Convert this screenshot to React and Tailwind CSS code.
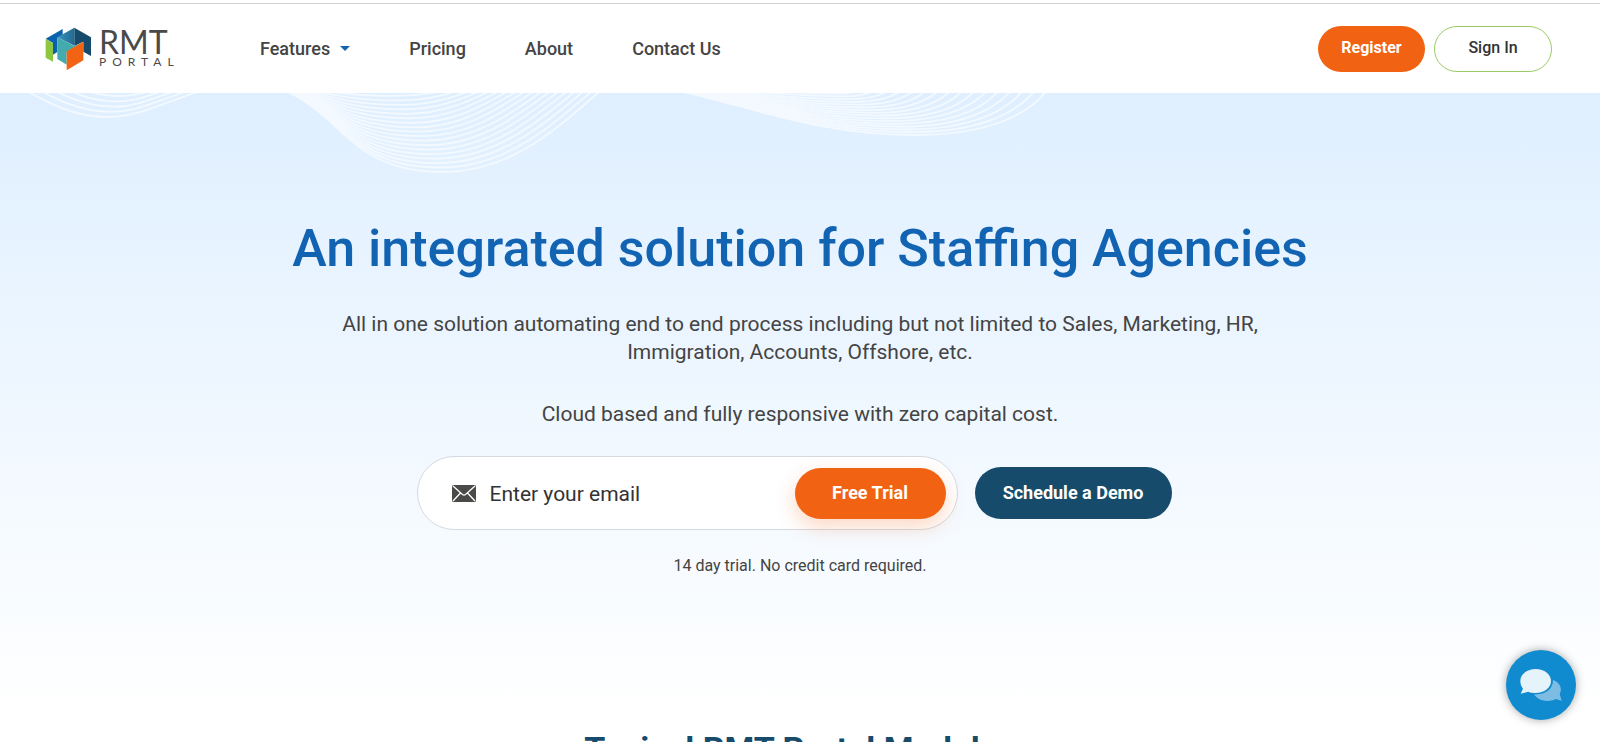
import React, { useState } from 'react'

const navLinks = ['Pricing', 'About', 'Contact Us']

// each group blends from its inner curve to its outer one: start, control, control, low point, control, control, end
const waveGroups = [
  {
    count: 6,
    inner: [80, -12, 90, -6, 105, -2, 122, -2, 138, -2, 150, -6, 165, -12],
    outer: [8, -12, 45, 8, 70, 24, 109, 24, 140, 24, 165, 8, 225, -10],
  },
  {
    count: 20,
    inner: [270, -12, 310, -8, 330, -6, 390, -6, 420, -6, 440, -8, 460, -10],
    outer: [258, -12, 345, 10, 340, 79, 443, 79, 520, 79, 570, 22, 612, -12],
  },
  {
    count: 18,
    inner: [650, -10, 710, -8, 770, -5, 830, -5, 840, -5, 847, -8, 852, -12],
    outer: [635, -10, 730, 3, 800, 42, 915, 42, 980, 42, 1030, 26, 1052, -10],
  },
]

function wavePath(group, i){
  const t = i / (group.count - 1)
  const p = group.inner.map((v, k) => (v + (group.outer[k] - v) * t).toFixed(1))
  return `M${p[0]} ${p[1]}C${p.slice(2, 8).join(' ')}C${p.slice(8).join(' ')}`
}

function Waves(){
  return (
    <svg className="absolute left-0 top-0" width="1100" height="90" viewBox="0 0 1100 90" fill="none" stroke="#f3f9ff" strokeWidth="1.8" aria-hidden="true">
      {waveGroups.map(g => (
        Array.from({ length: g.count }, (_, i) => <path key={`${g.count}-${i}`} d={wavePath(g, i)} />)
      ))}
    </svg>
  )
}

function Logo(){
  return (
    <a href="#" className="flex items-center gap-[7px] text-[#4a4a4a]">
      <svg width="47" height="44" viewBox="0 0 141 132" aria-hidden="true">
        <defs>
          <linearGradient id="cubeTop" x1="0" x2="1">
            <stop offset="0" stopColor="#3a93bd" />
            <stop offset="1" stopColor="#236a92" />
          </linearGradient>
        </defs>
        <path fill="#0a62ae" d="M2 35 53 6v17L37 33v42l-13 8V48z" />
        <path fill="#8fc63f" d="m2 36 22 13v55L2 92z" />
        <path fill="url(#cubeTop)" d="M37 31 88 2v54z" />
        <path fill="#174b6b" d="m88 2 50 29v56l-23-13V44L88 57z" />
        <path fill="#43aaae" d="m37 31 51 26 27-13-50 31v38L37 96z" />
        <path fill="#f26314" d="m115 44v56l-50 30V73z" />
      </svg>
      <span className="flex flex-col gap-0.5 font-[Lato]">
        <span className="text-[32px] leading-6">RMT</span>
        <span className="text-xs leading-3 tracking-[6px]">PORTAL</span>
      </span>
    </a>
  )
}

function Header(){
  return (
    <header className="mt-[3px] border-t border-[#d2d2d2] bg-white h-[90px] pl-[45px] pr-12 flex items-center">
      <div className="w-[215px] shrink-0"><Logo /></div>
      <nav className="flex items-center gap-[59px] text-lg font-medium text-[#444] grow">
        <a href="#" className="flex items-center gap-[10px]">
          Features
          <svg width="10" height="5" viewBox="0 0 10 5" aria-hidden="true"><path d="M0 0h10L5 5z" fill="#1264b3" /></svg>
        </a>
        {navLinks.map(l => <a key={l} href="#">{l}</a>)}
      </nav>
      <div className="flex gap-[9px] text-base">
        <button className="w-[107px] h-[46px] pb-0.5 rounded-full bg-[#f16313] text-white font-bold">Register</button>
        <button className="w-[118px] h-[46px] pb-0.5 rounded-full border border-[#9bcb65] text-[#333] font-medium">Sign In</button>
      </div>
    </header>
  )
}

function TrialForm(){
  const [email, setEmail] = useState('')

  return (
    <div className="mt-7 mr-3 flex items-center justify-center gap-[17px]">
      <form onSubmit={e => e.preventDefault()} className="w-[541px] h-[74px] pl-[34px] pr-[11px] flex items-center rounded-full border border-[#d5dae0] bg-white">
        <svg width="24" height="17" viewBox="0 0 24 17" aria-hidden="true">
          <rect width="24" height="17" rx="1.5" fill="#4a4a48" />
          <path d="M1 1l9.500 8.500q1.500 1.200 3 0L23 1M1 16l7.500-8M23 16l-7.500-8" fill="none" stroke="#fff" strokeWidth="1.300" />
        </svg>
        <input
          type="email"
          aria-label="Email"
          value={email}
          onChange={e => setEmail(e.target.value)}
          placeholder="Enter your email"
          className="ml-[14px] pt-0.5 grow min-w-0 text-[21px] leading-8 outline-none text-[#333] placeholder:text-[#333]"
        />
        <button className="w-[151px] h-[51px] shrink-0 rounded-full bg-[#f16313] text-white text-lg font-bold shadow-[0_8px_20px_rgba(241,99,19,0.25)]">Free Trial</button>
      </form>
      <button className="w-[197px] h-[52px] rounded-full bg-[#174b6b] text-white text-lg font-bold">Schedule a Demo</button>
    </div>
  )
}

function ChatButton(){
  return (
    <button aria-label="Chat" className="fixed right-6 bottom-[22px] size-[70px] rounded-full bg-[#118bcf] shadow-[0_0_10px_rgba(0,0,0,0.35)] flex items-center justify-center">
      <svg width="42" height="33" viewBox="0 0 126 99" aria-hidden="true">
        <path fill="#7ebde3" d="M99 33c21 8 29 26 20 42l6 20-18-5c-24 12-53 5-65-14 32 2 58-14 57-43z" />
        <path fill="#e5f3fb" d="M47 0c26 0 46 16 46 36S73 72 47 72c-8 0-16-1-22-4L2 74l7-15C4 53 1 45 1 36 1 16 21 0 47 0z" />
      </svg>
    </button>
  )
}

export default function App(){
  return (
    <div className="flow-root min-h-screen bg-white font-[Roboto,sans-serif] text-[#444]">
      <Header />
      <main>
        <section className="relative pt-[121px] pb-[137px] px-6 text-center bg-linear-to-b from-[#dfefff] to-white">
          <Waves />
          <h1 className="text-[52px] leading-[70px] font-medium text-[#1264b3]">An integrated solution for Staffing Agencies</h1>
          <p className="mt-[26px] mx-auto max-w-[940px] text-[21px] leading-7">
            All in one solution automating end to end process including but not limited to Sales, Marketing, HR, Immigration, Accounts, Offshore, etc.
          </p>
          <p className="mt-[34px] text-[21px] leading-7">Cloud based and fully responsive with zero capital cost.</p>
          <TrialForm />
          <p className="mt-6 text-base leading-6">14 day trial. No credit card required.</p>
        </section>
        <section className="pt-3 text-center">
          <h2 className="text-[34px] leading-[44px] font-bold text-[#174b6b]">Typical RMT Portal Modules</h2>
        </section>
      </main>
      <ChatButton />
    </div>
  )
}
